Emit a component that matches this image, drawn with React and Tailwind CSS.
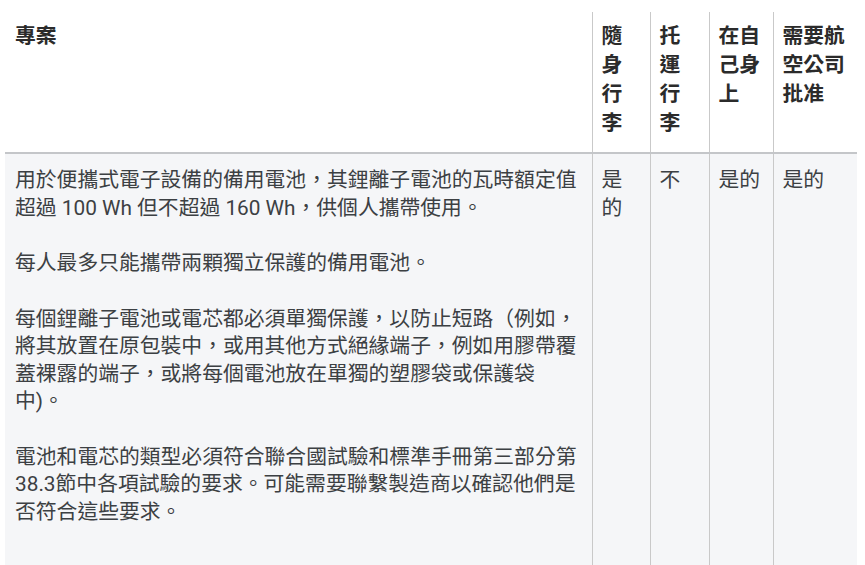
const HEADERS = [
  { label: "隨身行李", w: "w-[58px]" },
  { label: "托運行李", w: "w-[59px]" },
  { label: "在自己身上", w: "w-[64px]" },
  { label: "需要航空公司批准", w: "w-[84px]" },
];

const ANSWERS = ["是的", "不", "是的", "是的"];

const PARAGRAPHS = [
  "用於便攜式電子設備的備用電池，其鋰離子電池的瓦時額定值超過 100 Wh 但不超過 160 Wh，供個人攜帶使用。",
  "每人最多只能攜帶兩顆獨立保護的備用電池。",
  "每個鋰離子電池或電芯都必須單獨保護，以防止短路（例如，將其放置在原包裝中，或用其他方式絕緣端子，例如用膠帶覆蓋裸露的端子，或將每個電池放在單獨的塑膠袋或保護袋中)。",
  "電池和電芯的類型必須符合聯合國試驗和標準手冊第三部分第38.3節中各項試驗的要求。可能需要聯繫製造商以確認他們是否符合這些要求。",
];

export default function App() {
  return (
    <div
      className="w-[865px] h-[565px] overflow-hidden bg-white pt-[12px] pl-[5px]"
      style={{ fontFamily: 'Roboto, "Noto Sans CJK TC", sans-serif' }}
    >
      <table className="border-collapse table-fixed w-[852px] text-[20.8px]">
        <thead>
          <tr className="border-b-2 border-[#c4c6c9]">
            <th className="w-[587px] align-top text-left font-bold text-[#2b2b2b] leading-[29px] pl-[10px] pr-[10px] pt-[10px] pb-[14px]">
              專案
            </th>
            {HEADERS.map((h) => (
              <th
                key={h.label}
                className={`${h.w} align-top text-left font-bold text-[#2b2b2b] leading-[29px] border-l border-[#c9c9c9] pl-[9px] pr-[10px] pt-[10px] pb-[14px]`}
              >
                {h.label}
              </th>
            ))}
          </tr>
        </thead>
        <tbody>
          <tr className="bg-[#f5f6f8] h-[412px]">
            <td className="align-top text-[#3c4043] leading-[27.5px] pl-[10px] pr-[12px] pt-[13px]">
              {PARAGRAPHS.map((p, i) => (
                <p key={i} className={i < PARAGRAPHS.length - 1 ? "mb-[28px]" : ""}>
                  {p}
                </p>
              ))}
            </td>
            {ANSWERS.map((a, i) => (
              <td
                key={i}
                className="align-top text-[#3c4043] leading-[27.5px] border-l border-[#c9c9c9] pl-[9px] pr-[10px] pt-[13px]"
              >
                {a}
              </td>
            ))}
          </tr>
        </tbody>
      </table>
    </div>
  );
}
